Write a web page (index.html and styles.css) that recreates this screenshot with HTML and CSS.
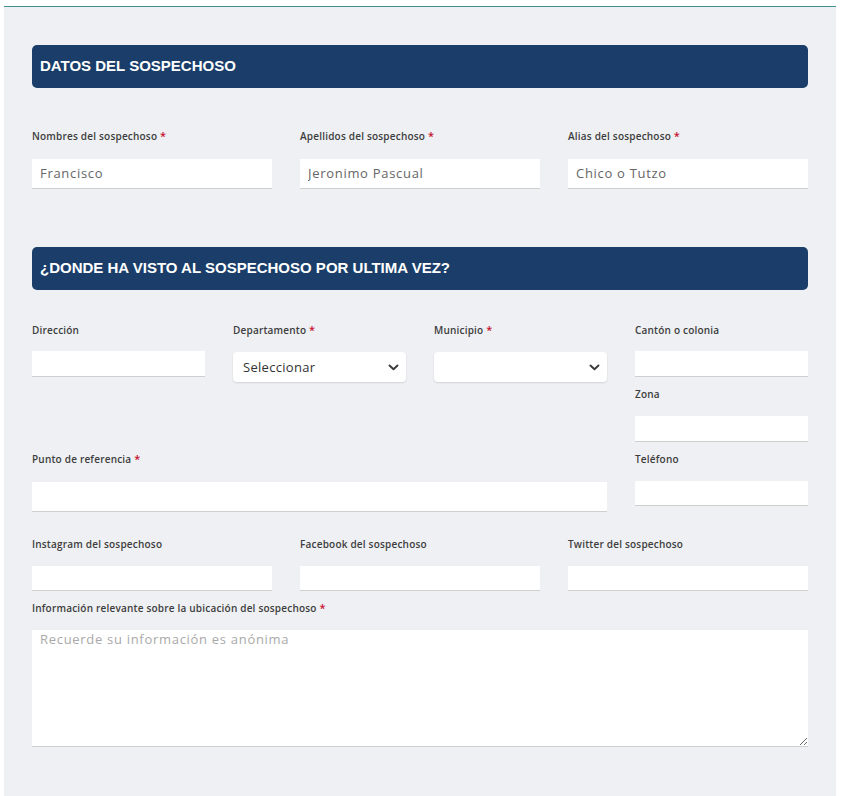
FILE: index.html
```html
<!DOCTYPE html>
<html lang="es">
<head>
<meta charset="utf-8">
<title>Datos del sospechoso</title>
<link rel="stylesheet" href="styles.css">
</head>
<body>
<div class="panel">
  <h2 class="section-head">DATOS DEL SOSPECHOSO</h2>
  <div class="row3 first-row">
    <div class="field">
      <label class="lbl">Nombres del sospechoso <span class="req">*</span></label>
      <input class="inp tall" type="text" value="Francisco">
    </div>
    <div class="field">
      <label class="lbl">Apellidos del sospechoso <span class="req">*</span></label>
      <input class="inp tall" type="text" value="Jeronimo Pascual">
    </div>
    <div class="field">
      <label class="lbl">Alias del sospechoso <span class="req">*</span></label>
      <input class="inp tall" type="text" value="Chico o Tutzo">
    </div>
  </div>

  <h2 class="section-head second">¿DONDE HA VISTO AL SOSPECHOSO POR ULTIMA VEZ?</h2>
  <div class="location">
    <div class="loc-left">
      <div class="row-left3">
        <div class="field">
          <label class="lbl">Dirección</label>
          <input class="inp" type="text">
        </div>
        <div class="field">
          <label class="lbl">Departamento <span class="req">*</span></label>
          <div class="sel sel-gap"><span>Seleccionar</span>
            <svg width="11" height="7" viewBox="0 0 11 7"><path d="M1.5 1.5 5.5 5.2l4-3.7" fill="none" stroke="#3a3a3a" stroke-width="1.9" stroke-linecap="round" stroke-linejoin="round"/></svg>
          </div>
        </div>
        <div class="field">
          <label class="lbl">Municipio <span class="req">*</span></label>
          <div class="sel sel-gap"><span></span>
            <svg width="11" height="7" viewBox="0 0 11 7"><path d="M1.5 1.5 5.5 5.2l4-3.7" fill="none" stroke="#3a3a3a" stroke-width="1.9" stroke-linecap="round" stroke-linejoin="round"/></svg>
          </div>
        </div>
      </div>
      <div class="field punto">
        <label class="lbl">Punto de referencia <span class="req">*</span></label>
        <input class="inp tall gap16" type="text">
      </div>
    </div>
    <div class="loc-right">
      <div class="field">
        <label class="lbl">Cantón o colonia</label>
        <input class="inp" type="text">
      </div>
      <div class="field next">
        <label class="lbl">Zona</label>
        <input class="inp gap15" type="text">
      </div>
      <div class="field next">
        <label class="lbl">Teléfono</label>
        <input class="inp short gap15" type="text">
      </div>
    </div>
  </div>

  <div class="row3 social">
    <div class="field">
      <label class="lbl">Instagram del sospechoso</label>
      <input class="inp short gap15" type="text">
    </div>
    <div class="field">
      <label class="lbl">Facebook del sospechoso</label>
      <input class="inp short gap15" type="text">
    </div>
    <div class="field">
      <label class="lbl">Twitter del sospechoso</label>
      <input class="inp short gap15" type="text">
    </div>
  </div>

  <div class="field info">
    <label class="lbl">Información relevante sobre la ubicación del sospechoso <span class="req">*</span></label>
    <textarea class="txt" placeholder="Recuerde su información es anónima"></textarea>
  </div>
</div>
</body>
</html>
```

FILE: styles.css
```css
html, body {
  margin: 0;
  padding: 0;
  background: #ffffff;
}
body {
  font-family: "Open Sans", "Liberation Sans", sans-serif;
  padding: 6px 6px 0 4px;
}
.panel {
  background: #eef0f3;
  border-top: 1px solid #3f8f8e;
  padding: 38px 28px 60px 28px;
  min-height: 760px;
  box-sizing: border-box;
}
.section-head {
  margin: 0;
  height: 43px;
  box-sizing: border-box;
  background: #1a3e69;
  border-radius: 5px;
  color: #ffffff;
  font-family: "Liberation Sans", Arial, sans-serif;
  font-weight: 700;
  font-size: 15px;
  line-height: 42px;
  padding: 0 8px;
}
.section-head.second {
  margin-top: 58px;
}
.field {
  display: flex;
  flex-direction: column;
  min-width: 0;
}
.lbl {
  font-size: 10px;
  font-weight: 600;
  color: #3d3d3d;
  letter-spacing: 0.2px;
  line-height: 14px;
  height: 14px;
  white-space: nowrap;
}
.req {
  color: #c8102e;
  font-size: 11px;
}
.inp {
  display: block;
  width: 100%;
  box-sizing: border-box;
  height: 26px;
  margin: 14px 0 0 0;
  border: 0;
  border-bottom: 1px solid #cfcfcf;
  background: #ffffff;
  padding: 0 8px 2px 8px;
  font-family: "Open Sans", "Liberation Sans", sans-serif;
  font-size: 13px;
  letter-spacing: 0.7px;
  color: #666666;
  outline: none;
}
.inp.tall {
  height: 30px;
  margin-top: 16px;
}
.inp.short {
  height: 25px;
}
.inp.gap15 {
  margin-top: 15px;
}
.inp.gap16 {
  margin-top: 16px;
}
.row3 {
  display: grid;
  grid-template-columns: repeat(3, 1fr);
  column-gap: 28px;
}
.first-row {
  margin-top: 41px;
}
.location {
  display: flex;
  gap: 28px;
  margin-top: 33px;
}
.loc-left {
  flex: 1 1 auto;
  min-width: 0;
}
.row-left3 {
  display: grid;
  grid-template-columns: repeat(3, 1fr);
  column-gap: 28px;
}
.loc-right {
  width: 173px;
  flex: 0 0 173px;
}
.field.next {
  margin-top: 10px;
}
.sel {
  height: 30px;
  box-sizing: border-box;
  background: #ffffff;
  border-radius: 4px;
  box-shadow: 0 1px 2px rgba(0, 0, 0, 0.12);
  display: flex;
  align-items: center;
  justify-content: space-between;
  padding: 0 7px 0 10px;
  font-size: 13px;
  letter-spacing: 0.3px;
  color: #333333;
}
.sel-gap {
  margin-top: 15px;
}
.sel svg {
  display: block;
  margin-top: 1px;
}
.punto {
  margin-top: 70px;
}
.social {
  margin-top: 25px;
}
.info {
  margin-top: 10px;
}
.txt {
  display: block;
  width: 100%;
  box-sizing: border-box;
  height: 117px;
  margin-top: 15px;
  border: 0;
  border-bottom: 1px solid #cfcfcf;
  background: #ffffff;
  padding: 0 8px;
  font-family: "Open Sans", "Liberation Sans", sans-serif;
  font-size: 13px;
  letter-spacing: 0.7px;
  line-height: 18px;
  color: #666666;
  outline: none;
  resize: vertical;
}
.txt::placeholder {
  color: #a9a9a9;
}
```
